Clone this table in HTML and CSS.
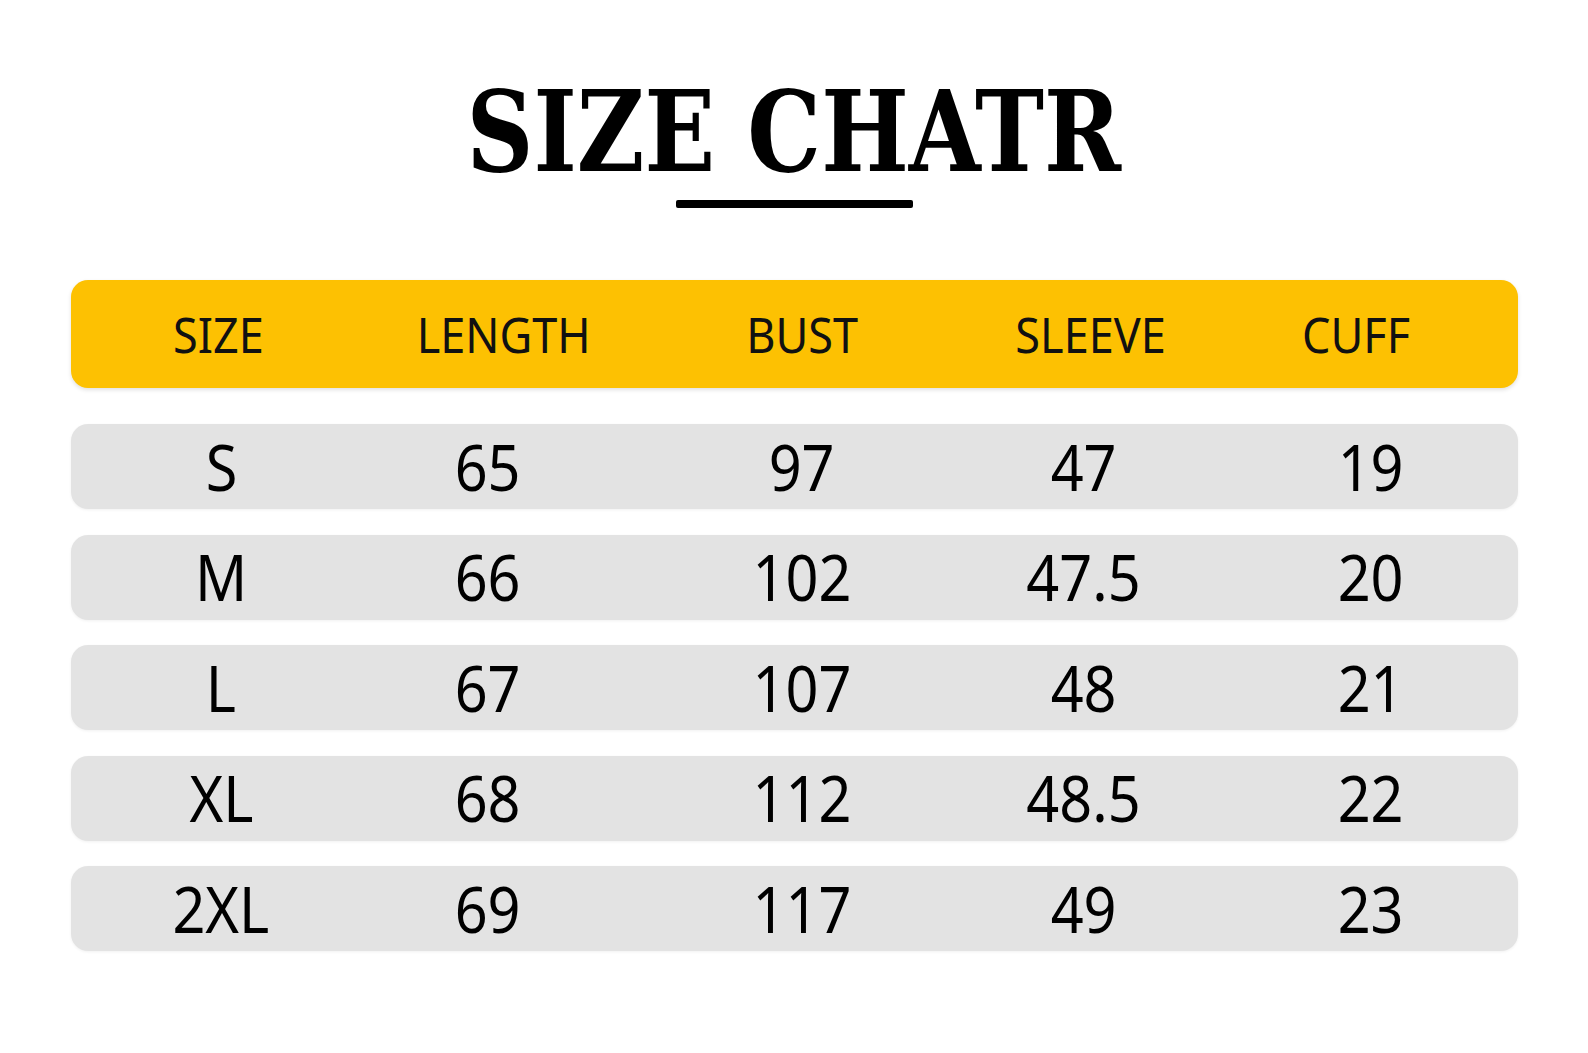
FILE: index.html
```html
<!DOCTYPE html>
<html>
<head>
<meta charset="utf-8">
<link rel="stylesheet" href="styles.css">
</head>
<body>
<div class="page">
  <h1 class="title"><span class="title-text">SIZE CHATR</span></h1>
  <div class="title-bar"></div>
  <div class="table">
    <div class="row head">
      <div class="cell"><span>SIZE</span></div>
      <div class="cell"><span>LENGTH</span></div>
      <div class="cell"><span>BUST</span></div>
      <div class="cell"><span>SLEEVE</span></div>
      <div class="cell"><span>CUFF</span></div>
    </div>
    <div class="row data">
      <div class="cell"><span>S</span></div>
      <div class="cell"><span>65</span></div>
      <div class="cell"><span>97</span></div>
      <div class="cell"><span>47</span></div>
      <div class="cell"><span>19</span></div>
    </div>
    <div class="row data">
      <div class="cell"><span>M</span></div>
      <div class="cell"><span>66</span></div>
      <div class="cell"><span>102</span></div>
      <div class="cell"><span>47.5</span></div>
      <div class="cell"><span>20</span></div>
    </div>
    <div class="row data">
      <div class="cell"><span>L</span></div>
      <div class="cell"><span>67</span></div>
      <div class="cell"><span>107</span></div>
      <div class="cell"><span>48</span></div>
      <div class="cell"><span>21</span></div>
    </div>
    <div class="row data">
      <div class="cell"><span>XL</span></div>
      <div class="cell"><span>68</span></div>
      <div class="cell"><span>112</span></div>
      <div class="cell"><span>48.5</span></div>
      <div class="cell"><span>22</span></div>
    </div>
    <div class="row data">
      <div class="cell"><span>2XL</span></div>
      <div class="cell"><span>69</span></div>
      <div class="cell"><span>117</span></div>
      <div class="cell"><span>49</span></div>
      <div class="cell"><span>23</span></div>
    </div>
  </div>
</div>
</body>
</html>
```

FILE: styles.css
```css
html, body {
  margin: 0;
  padding: 0;
  background: #ffffff;
}

.page {
  width: 1588px;
  height: 1053px;
  display: flex;
  flex-direction: column;
  align-items: center;
}

.title {
  margin: 76px 0 0 0;
  height: 112px;
  font-family: "DejaVu Serif", serif;
  font-stretch: condensed;
  font-weight: 700;
  font-size: 112px;
  line-height: 112px;
  color: #000;
  text-align: center;
  white-space: nowrap;
}

.title-text {
  display: inline-block;
  transform: scaleX(0.92);
  transform-origin: center;
}

.title-bar {
  margin-top: 12px;
  width: 237px;
  height: 8px;
  border-radius: 2px;
  background: #000;
}

.table {
  margin-top: 72px;
  width: 1447px;
  display: flex;
  flex-direction: column;
  gap: 25.5px;
}

.row {
  display: grid;
  grid-template-columns: repeat(5, 1fr);
  align-items: center;
  border-radius: 17px;
}

.head {
  height: 108px;
  background: #fdc102;
  box-shadow: 0 2px 4px rgba(0, 0, 0, 0.12);
  margin-bottom: 10.5px;
  font-family: "Noto Sans", sans-serif;
  font-size: 50px;
  color: #111;
}

.data {
  height: 85px;
  background: #e3e3e3;
  box-shadow: 0 1px 3px rgba(0, 0, 0, 0.06);
  font-family: "Noto Sans", sans-serif;
  font-size: 64px;
  color: #000;
}

.cell {
  text-align: center;
  line-height: 1;
}

.cell span {
  display: inline-block;
  transform: scaleX(0.9);
}

/* column nudges, header */
.head .cell:nth-child(1) { padding-left: 6px; }
.head .cell:nth-child(2) { padding-right: 2px; }
.head .cell:nth-child(3) { padding-left: 17px; }
.head .cell:nth-child(4) { padding-left: 14px; }
.head .cell:nth-child(5) { padding-right: 34px; }

/* column nudges, data rows */
.data .cell:nth-child(1) { padding-left: 12px; }
.data .cell:nth-child(2) { padding-right: 34px; }
.data .cell:nth-child(3) { padding-left: 15px; }
.data .cell:nth-child(5) { padding-right: 4px; }
```
